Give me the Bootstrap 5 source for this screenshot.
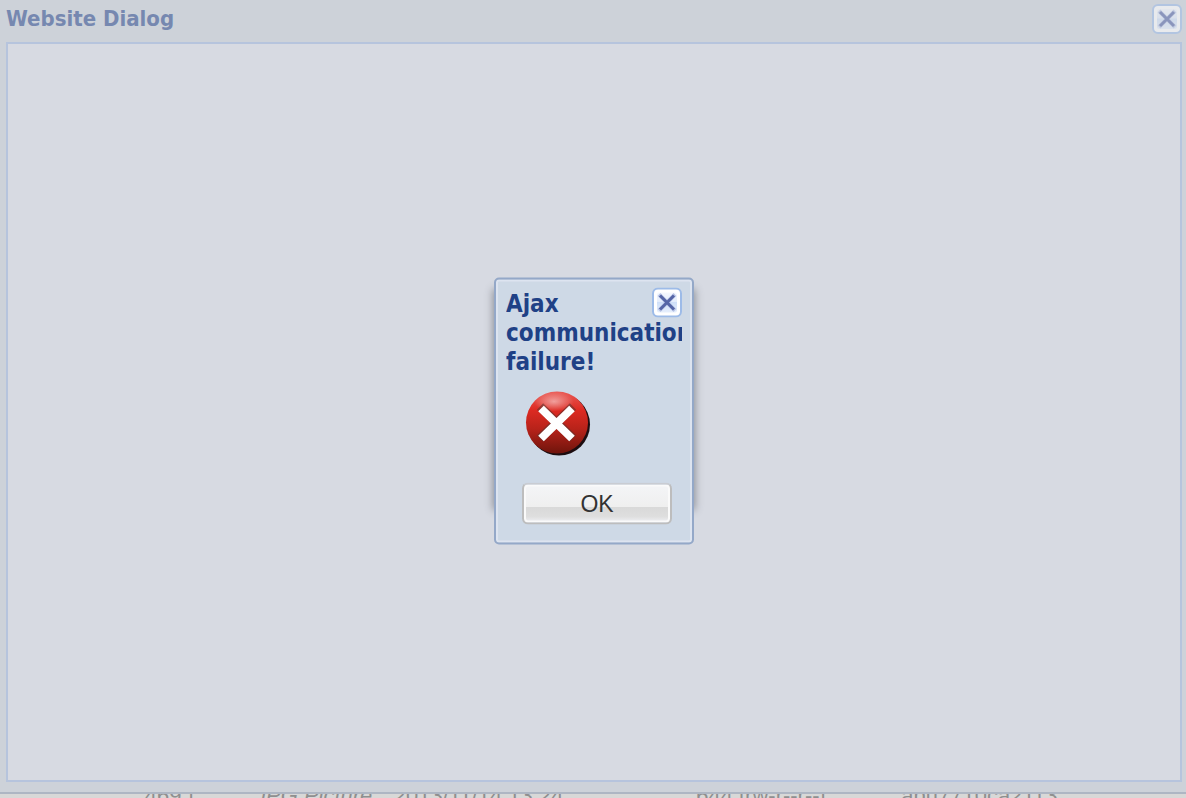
<!DOCTYPE html>
<html lang="en">
<head>
<meta charset="utf-8">
<meta name="viewport" content="width=device-width, initial-scale=1">
<title>Website Dialog</title>
<link href="https://cdn.jsdelivr.net/npm/bootstrap@5.3.0/dist/css/bootstrap.min.css" rel="stylesheet">
<style>
body { background: #d8d8d7; font-family: "Liberation Sans", Arial, sans-serif; }
.dialog-frame { background: #cdd2d9; border-bottom: 2px solid #aeb6c3; padding: 0 4px 10px 6px; }
.dialog-head { height: 42px; padding-top: 4px; }
.dialog-title { font: bold 22px/30px "DejaVu Sans Condensed", "DejaVu Sans", sans-serif; font-stretch: condensed; color: #7688b0; }
.dialog-body { background: #d7dae2; border: 2px solid #b6c4dd; }
.close-tool { width: 30px; height: 30px; padding: 0; border: 0; background: none; line-height: 0; flex: none; }
.close-tool.muted { opacity: .55; }
.file-row { height: 4px; color: #8f8f8f; font-size: 22px; line-height: 22px; }
.file-row table { width: 100%; table-layout: fixed; margin-top: -9px; white-space: nowrap; }
.file-row td { padding: 0; }
.alert-wrap { margin: 12px 0 0 1px; }
.alert-box { width: 200px; background: #ced9e6; border: 2px solid #94a8c8; border-radius: 5px; box-shadow: inset 0 0 0 2px #dde4f0; padding: 10px 10px 18px; }
.alert-wrap::before { content: ""; position: absolute; inset: 12px 0 36px; box-shadow: 0 0 8px 1px #8b8e96; }
.alert-title { font: bold 24px/29px "DejaVu Sans Condensed", "DejaVu Sans", sans-serif; font-stretch: condensed; color: #1f4186; }
.alert-close { position: absolute; top: 8px; right: 10px; }
.alert-icon { margin: 14px 0 26px 16px; }
.alert-actions { padding-right: 10px; }
.ok-btn { width: 150px; height: 42px; padding: 0; border: 2px solid #bdbdbd; border-top-color: #c9ccd2; border-radius: 6px; color: #333; font-size: 23px; line-height: 38px; background: linear-gradient(#f4f5f7 0, #efefef 58%, #d9d9d9 60%, #dedede 84%, #f0f1f5 100%); box-shadow: inset 0 0 0 2px #fafafa; }
</style>
</head>
<body class="vh-100 overflow-hidden d-flex flex-column">
<svg width="0" height="0" class="position-absolute" aria-hidden="true">
  <defs>
    <linearGradient id="toolFill" x2="0" y2="1"><stop stop-color="#f5f8fe"/><stop offset=".45" stop-color="#e4edfc"/><stop offset=".5" stop-color="#cfdff8"/><stop offset="1" stop-color="#e6effc"/></linearGradient>
    <symbol id="closeIcon" viewBox="0 0 30 30">
      <rect x="1" y="1" width="28" height="28" rx="5" fill="#fff" stroke="#9dbbe8" stroke-width="2"/>
      <rect x="5" y="5" width="20" height="20" rx="2" fill="url(#toolFill)"/>
      <path d="M7 7l16 16M23 7l-16 16" stroke="#b9c5e6" stroke-width="4"/>
      <path d="M8 8l14 14M22 8l-14 14" stroke="#5565a6" stroke-width="3"/>
    </symbol>
  </defs>
</svg>
<main class="dialog-frame flex-grow-1 d-flex flex-column">
  <header class="dialog-head d-flex justify-content-between">
    <h1 class="dialog-title m-0">Website Dialog</h1>
    <button type="button" class="close-tool muted" aria-label="Close dialog"><svg width="30" height="30"><use href="#closeIcon"/></svg></button>
  </header>
  <div class="dialog-body flex-grow-1"></div>
</main>
<div class="file-row overflow-hidden">
  <table>
    <colgroup><col style="width:12.2%"><col style="width:9.3%"><col style="width:11.7%"><col style="width:25.5%"><col style="width:17.3%"><col></colgroup>
    <tbody><tr><td></td><td>469 ]</td><td class="fst-italic">JPG Picture</td><td>2013/11/14 13:24</td><td>644 [rw-r--r--]</td><td>apu7710ca2113</td></tr></tbody>
  </table>
</div>
<div class="alert-wrap position-absolute top-50 start-50 translate-middle">
  <section class="alert-box position-relative" role="alertdialog" aria-labelledby="alertTitle">
    <h2 id="alertTitle" class="alert-title m-0 overflow-hidden">Ajax<br>communication<br>failure!</h2>
    <button type="button" class="close-tool alert-close" aria-label="Close message"><svg width="30" height="30"><use href="#closeIcon"/></svg></button>
    <svg class="alert-icon d-block" width="72" height="66" viewBox="-4 0 72 66" role="img" aria-label="Error">
      <defs>
        <linearGradient id="redBall" x2="0" y2="1"><stop stop-color="#e95a55"/><stop offset=".3" stop-color="#dd2a22"/><stop offset=".6" stop-color="#b8231a"/><stop offset="1" stop-color="#6f140c"/></linearGradient>
        <radialGradient id="gloss"><stop stop-color="#fff" stop-opacity=".5"/><stop offset="1" stop-color="#fff" stop-opacity="0"/></radialGradient>
      </defs>
      <circle cx="33" cy="34" r="31" fill="#1c0d10"/>
      <circle cx="31" cy="32" r="31" fill="url(#redBall)"/>
      <ellipse cx="28" cy="11" rx="20" ry="10" fill="url(#gloss)"/>
      <path d="M14 16l33 32M47 16l-33 32" stroke="#5f342f" stroke-opacity=".6" stroke-width="9"/>
      <path d="M15 18l31 30M46 18l-31 30" stroke="#fff" stroke-width="8"/>
    </svg>
    <div class="alert-actions d-flex justify-content-end"><button type="button" class="ok-btn">OK</button></div>
  </section>
</div>
<script src="https://cdn.jsdelivr.net/npm/bootstrap@5.3.0/dist/js/bootstrap.bundle.min.js"></script>
</body>
</html>
